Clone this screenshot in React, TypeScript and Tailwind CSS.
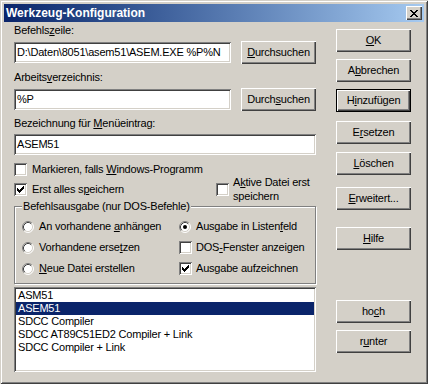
import React from 'react'

const raised = 'shadow-[inset_1px_1px_#ffffff,inset_-1px_-1px_#404040,inset_-2px_-2px_#808080]'
const sunken = 'shadow-[inset_1px_1px_#808080,inset_-1px_-1px_#ffffff,inset_2px_2px_#404040,inset_-2px_-2px_#d4d0c8]'

interface BtnProps {
    children: React.ReactNode;
    className?: string;
    def?: boolean;
}

const Btn: React.FC<BtnProps> = ({ children, className = '', def }) => (
    <div
        className={`h-[23px] w-[75px] flex items-center justify-center bg-[#d4d0c8] shrink-0 ${raised} ${def ? 'border border-black' : ''} ${className}`}
    >
        <span>{children}</span>
    </div>
)

const Field: React.FC<{ children?: React.ReactNode; className?: string }> = ({ children, className = '' }) => (
    <div className={`h-[21px] bg-white flex items-center px-[3px] whitespace-nowrap overflow-hidden ${sunken} ${className}`}>
        {children}
    </div>
)

const Check: React.FC<{ checked?: boolean }> = ({ checked }) => (
    <span className={`w-[13px] h-[13px] bg-white shrink-0 flex items-center justify-center ${sunken}`}>
        {checked && (
            <svg width="7" height="7" viewBox="0 0 7 7" shapeRendering="crispEdges">
                <rect x="0" y="2" width="1" height="3" fill="#000" />
                <rect x="1" y="3" width="1" height="3" fill="#000" />
                <rect x="2" y="4" width="1" height="3" fill="#000" />
                <rect x="3" y="3" width="1" height="3" fill="#000" />
                <rect x="4" y="2" width="1" height="3" fill="#000" />
                <rect x="5" y="1" width="1" height="3" fill="#000" />
                <rect x="6" y="0" width="1" height="3" fill="#000" />
            </svg>
        )}
    </span>
)

const Radio: React.FC<{ checked?: boolean }> = ({ checked }) => (
    <span className="w-[13px] h-[13px] shrink-0 flex items-center">
        <svg width="12" height="12" viewBox="0 0 12 12">
            <circle cx="6" cy="6" r="5" fill="#fff" />
            <path d="M2.11 9.89 A5.5 5.5 0 0 1 9.89 2.11" stroke="#808080" fill="none" />
            <path d="M9.89 2.11 A5.5 5.5 0 0 1 2.11 9.89" stroke="#ffffff" fill="none" />
            <path d="M2.82 9.18 A4.5 4.5 0 0 1 9.18 2.82" stroke="#404040" fill="none" />
            <path d="M9.18 2.82 A4.5 4.5 0 0 1 2.82 9.18" stroke="#d4d0c8" fill="none" />
            {checked && <circle cx="6" cy="6" r="2" fill="#000" />}
        </svg>
    </span>
)

const items = ['ASM51', 'ASEM51', 'SDCC Compiler', 'SDCC AT89C51ED2 Compiler + Link', 'SDCC Compiler + Link']

export default function App() {
    return (
        <div className="w-[428px] h-[384px] bg-[#d4d0c8] p-[4px] shadow-[inset_1px_1px_#d4d0c8,inset_-1px_-1px_#404040,inset_2px_2px_#ffffff,inset_-2px_-2px_#808080] font-['Liberation_Sans',Arial,sans-serif] text-[11px] leading-[13px] tracking-[-0.2px] text-black">
            {/* title bar */}
            <div className="h-[18px] flex items-center bg-linear-to-r from-[#0a246a] to-[#a6caf0] px-[2px]">
                <span className="text-white font-bold text-[12px] tracking-normal">Werkzeug-Konfiguration</span>
                <div className={`ml-auto w-[16px] h-[14px] bg-[#d4d0c8] flex items-center justify-center ${raised}`}>
                    <svg width="8" height="7" viewBox="0 0 8 7" shapeRendering="crispEdges">
                        <rect x="0" y="0" width="2" height="1" />
                        <rect x="6" y="0" width="2" height="1" />
                        <rect x="1" y="1" width="2" height="1" />
                        <rect x="5" y="1" width="2" height="1" />
                        <rect x="2" y="2" width="4" height="1" />
                        <rect x="3" y="3" width="2" height="1" />
                        <rect x="2" y="4" width="4" height="1" />
                        <rect x="1" y="5" width="2" height="1" />
                        <rect x="5" y="5" width="2" height="1" />
                        <rect x="0" y="6" width="2" height="1" />
                        <rect x="6" y="6" width="2" height="1" />
                    </svg>
                </div>
            </div>

            <div className="flex pl-[10px]">
                {/* left column */}
                <div className="w-[302px] flex flex-col">
                    <p className="mt-[2px]">Befehls<u>z</u>eile:</p>
                    <div className="mt-[4px] h-[23px] flex items-center gap-[10px]">
                        <Field className="w-[218px]">D:\Daten\8051\asem51\ASEM.EXE %P%N</Field>
                        <Btn className="w-[74px]"><u>D</u>urchsuchen</Btn>
                    </div>

                    <p className="mt-[7px]">Arbeits<u>v</u>erzeichnis:</p>
                    <div className="mt-[4px] h-[23px] flex items-center gap-[10px]">
                        <Field className="w-[218px]">%P</Field>
                        <Btn className="w-[74px]">Durch<u>s</u>uchen</Btn>
                    </div>

                    <p className="mt-[6px]">Bezeichnung für <u>M</u>enüeintrag:</p>
                    <Field className="mt-[4px] w-[302px]">ASEM51</Field>

                    <div className="mt-[8px] h-[13px] flex items-center gap-[5px]">
                        <Check />
                        <span>Markieren, falls <u>W</u>indows-Programm</span>
                    </div>

                    <div className="mt-[7px] h-[13px] flex items-start">
                        <div className="w-[202px] flex items-center gap-[5px]">
                            <Check checked />
                            <span>Erst alles s<u>p</u>eichern</span>
                        </div>
                        <div className="flex items-start gap-[4px]">
                            <Check />
                            <span className="-mt-[8px] leading-[14px]">
                                A<u>k</u>tive Datei erst
                                <br />
                                speichern
                            </span>
                        </div>
                    </div>

                    {/* group box */}
                    <div className="mt-[10px] relative h-[78px] border border-[#808080] shadow-[inset_1px_1px_#ffffff,1px_1px_#ffffff]">
                        <span className="absolute -top-[7px] left-[7px] bg-[#d4d0c8] px-[1px]">
                            Befehlsausgabe (nur DOS-Befehle)
                        </span>
                        <div className="grid grid-cols-[157px_1fr] gap-y-[8px] pl-[7px] pt-[13px]">
                            <div className="h-[13px] flex items-center gap-[4px]">
                                <Radio />
                                <span>An vorhandene <u>a</u>nhängen</span>
                            </div>
                            <div className="h-[13px] flex items-center gap-[4px]">
                                <Radio checked />
                                <span>Ausgabe in Listen<u>f</u>eld</span>
                            </div>
                            <div className="h-[13px] flex items-center gap-[4px]">
                                <Radio />
                                <span>Vorhandene erse<u>t</u>zen</span>
                            </div>
                            <div className="h-[13px] flex items-center gap-[4px]">
                                <Check />
                                <span>DOS<u>-</u>Fenster anzeigen</span>
                            </div>
                            <div className="h-[13px] flex items-center gap-[4px]">
                                <Radio />
                                <span><u>N</u>eue Datei erstellen</span>
                            </div>
                            <div className="h-[13px] flex items-center gap-[4px]">
                                <Check checked />
                                <span>Ausgabe aufzeichnen</span>
                            </div>
                        </div>
                    </div>

                    {/* list */}
                    <div className={`mt-[3px] h-[85px] bg-white p-[2px] ${sunken}`}>
                        {items.map((it, i) => (
                            <div
                                key={it}
                                className={`h-[13px] leading-[13px] px-[2px] whitespace-nowrap ${i === 1 ? 'bg-[#0a246a] text-white' : ''}`}
                            >
                                {it}
                            </div>
                        ))}
                    </div>
                </div>

                {/* right column */}
                <div className="ml-[20px] w-[75px] flex flex-col">
                    <Btn className="mt-[7px]"><u>O</u>K</Btn>
                    <Btn className="mt-[7px]">A<u>b</u>brechen</Btn>
                    <Btn className="mt-[7px]" def>H<u>i</u>nzufügen</Btn>
                    <Btn className="mt-[9px]">E<u>r</u>setzen</Btn>
                    <Btn className="mt-[8px]"><u>L</u>öschen</Btn>
                    <Btn className="mt-[12px]"><u>E</u>rweitert...</Btn>
                    <Btn className="mt-[17px]"><u>H</u>ilfe</Btn>
                    <Btn className="mt-[50px]">ho<u>c</u>h</Btn>
                    <Btn className="mt-[7px]">r<u>u</u>nter</Btn>
                </div>
            </div>
        </div>
    )
}
